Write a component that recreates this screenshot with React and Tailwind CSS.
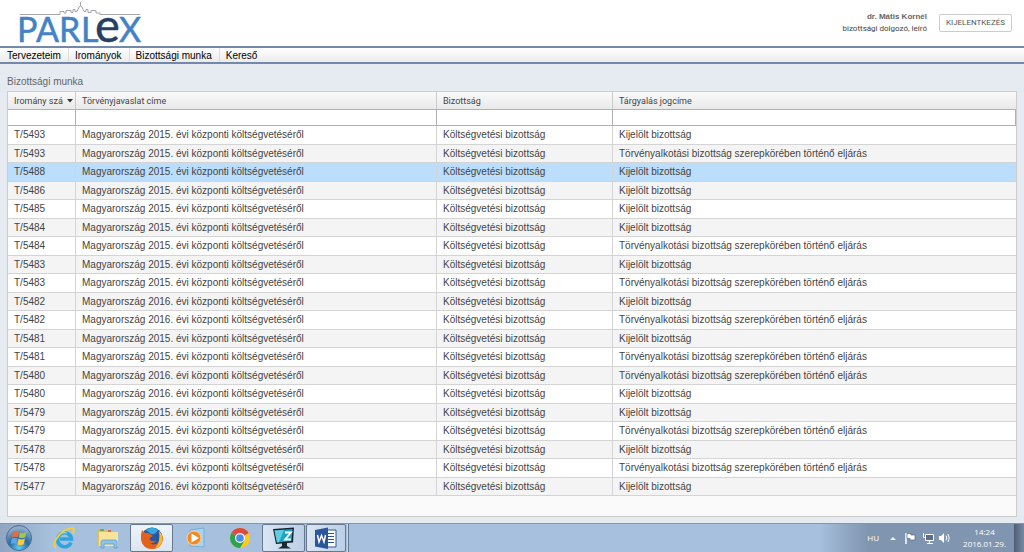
"use client"

import { useState } from "react"

const MENU = ["Tervezeteim", "Irományok", "Bizottsági munka", "Kereső"]

const KIJELOLT = "Kijelölt bizottság"
const TORVENY = "Törvényalkotási bizottság szerepkörében történő eljárás"

const ROWS = [
  { no: "T/5493", year: 2015, title: KIJELOLT },
  { no: "T/5493", year: 2015, title: TORVENY },
  { no: "T/5488", year: 2015, title: KIJELOLT },
  { no: "T/5486", year: 2015, title: KIJELOLT },
  { no: "T/5485", year: 2015, title: KIJELOLT },
  { no: "T/5484", year: 2015, title: KIJELOLT },
  { no: "T/5484", year: 2015, title: TORVENY },
  { no: "T/5483", year: 2015, title: KIJELOLT },
  { no: "T/5483", year: 2015, title: TORVENY },
  { no: "T/5482", year: 2016, title: KIJELOLT },
  { no: "T/5482", year: 2016, title: TORVENY },
  { no: "T/5481", year: 2015, title: KIJELOLT },
  { no: "T/5481", year: 2015, title: TORVENY },
  { no: "T/5480", year: 2016, title: TORVENY },
  { no: "T/5480", year: 2016, title: KIJELOLT },
  { no: "T/5479", year: 2015, title: KIJELOLT },
  { no: "T/5479", year: 2015, title: TORVENY },
  { no: "T/5478", year: 2015, title: KIJELOLT },
  { no: "T/5478", year: 2015, title: TORVENY },
  { no: "T/5477", year: 2016, title: KIJELOLT }
]

const COLUMNS = [
  { id: "no", label: "Iromány szá", width: "w-[68px]" },
  { id: "bill", label: "Törvényjavaslat címe", width: "w-[361px]" },
  { id: "committee", label: "Bizottság", width: "w-[176px]" },
  { id: "title", label: "Tárgyalás jogcíme", width: "" }
]

function Logo() {
  return (
    <svg width="124" height="44" viewBox="0 0 124 44" className="overflow-visible" role="img" aria-label="Parlex">
      <path
        d="M2 13.5H42V10.500H46V12H48V9.500H53V11.500H55V8.500H57V10.500H59L61 6L62.500 5V1V5L64 6L66 10.500H68V8.500H70V11.500H73V9.500H78V12H82V13.5H122"
        fill="none"
        stroke="#a3a5a8"
        strokeWidth="1"
      />
      <g fontFamily="Lato, sans-serif" fontSize="34" fill="#4382c4" stroke="#4382c4" strokeWidth="0.5">
        <text x="-1" y="41">P</text>
        <text x="18" y="41">A</text>
        <text x="41" y="41">R</text>
        <text x="63" y="41">L</text>
        <text x="101" y="41">X</text>
        <text x="77" y="41" fontSize="47" fill="#263f63" stroke="#263f63">e</text>
      </g>
    </svg>
  )
}

function StartIcon() {
  return (
    <svg width="28" height="28" viewBox="0 0 28 28">
      <defs>
        <radialGradient id="orb" cx="50%" cy="90%" r="80%">
          <stop offset="0" stopColor="#5fd0f5" />
          <stop offset="0.5" stopColor="#2a69a4" />
          <stop offset="1" stopColor="#8fadc9" />
        </radialGradient>
      </defs>
      <circle cx="14" cy="14" r="12.5" fill="url(#orb)" stroke="#4b6a90" />
      <path d="M8 8.500Q10.500 6.500 13.800 8L12.800 13.300Q9.800 12 7 13.500Z" fill="#ee6a33" />
      <path d="M14.800 8.500Q18 10 21.500 8L20.300 13.300Q17 15 13.800 13.600Z" fill="#9cc84b" />
      <path d="M6.700 14.700Q9.800 13.200 12.500 14.500L11.400 20Q8.500 18.500 5.500 20Z" fill="#5aa9e6" />
      <path d="M13.500 14.800Q16.500 16.300 20 14.600L18.600 20.200Q15.500 21.800 12.400 20.400Z" fill="#fccb3c" />
    </svg>
  )
}

function ExplorerIcon() {
  return (
    <svg width="24" height="24" viewBox="0 0 24 24">
      <path
        d="M19 16.500A7 7 0 1 1 19.500 13H8"
        fill="none"
        stroke="#2fa5e0"
        strokeWidth="3.600"
      />
      <path d="M7 9Q10 5.500 15 7" fill="none" stroke="#8fdcf8" strokeWidth="1.200" />
      <path d="M4 21.500C-1 19 6 7 16 2.800C21 0.800 23.500 2.500 20.500 7.500" fill="none" stroke="#f4ce3b" strokeWidth="2" />
    </svg>
  )
}

function FolderIcon() {
  return (
    <svg width="24" height="24" viewBox="0 0 24 24">
      <path d="M2 3H9L11 5H21V19H2Z" fill="#e4bd58" />
      <path d="M3 6H22V20H3Z" fill="#f8e49a" />
      <path d="M4 4H8" stroke="#4ba95a" strokeWidth="1.500" />
      <path d="M12 5H15" stroke="#d9533f" strokeWidth="1.500" />
      <path d="M5 22V16Q5 14 7 14H19Q21 14 21 16V22H18V18H8V22Z" fill="#8fc4e8" stroke="#5c9dcb" strokeWidth="0.800" />
    </svg>
  )
}

function FirefoxIcon() {
  return (
    <svg width="24" height="24" viewBox="0 0 24 24">
      <circle cx="12" cy="12" r="10.500" fill="#2558a0" />
      <path d="M6 4Q12 -0.500 18 4Q16 9 11 8Z" fill="#36a8dc" />
      <path d="M2 4L5 7Q8 6 10 8L13 10Q10 11 9.500 13Q12 17 16 14Q14 18 10 17Q16 21 19 15Q21 10 18 5Q24 9 23 14Q21 23 12 23Q3 23 1 14Q0.500 9 2 4Z" fill="#e2621b" />
      <path d="M19 5Q24 10 22 16Q20 21 15 22.500Q21 16 19 5Z" fill="#f8b92e" />
    </svg>
  )
}

function MediaIcon() {
  return (
    <svg width="24" height="24" viewBox="0 0 24 24">
      <path d="M6 4L20 2V21L6 20Z" fill="#a9d3ee" stroke="#75aeda" />
      <circle cx="10" cy="12" r="7" fill="#f08a24" stroke="#fbd3a0" />
      <path d="M7.500 7.500L15 12L7.500 16.500Z" fill="#fff" />
    </svg>
  )
}

function ChromeIcon() {
  return (
    <svg width="24" height="24" viewBox="0 0 24 24">
      <circle cx="12" cy="12" r="10" fill="#fbc91f" />
      <path d="M12 12L3.340 7A10 10 0 0 1 20.660 7Z" fill="#dd4b3e" />
      <path d="M12 12L3.340 7A10 10 0 0 0 12 22L16.500 14.500Z" fill="#2ba24c" />
      <circle cx="12" cy="12" r="5" fill="#fff" />
      <circle cx="12" cy="12" r="3.800" fill="#4a8bec" />
    </svg>
  )
}

function MonitorIcon() {
  return (
    <svg width="24" height="24" viewBox="0 0 24 24">
      <path d="M1 3L22 1.500L21 16.500L4 18Z" fill="#15242c" />
      <path d="M2.500 4.500L20.500 3L19.500 15L5 16.500Z" fill="#1fa5c4" />
      <path d="M2.500 4.500L12 3.700L7 16.300L5 16.500Z" fill="#63cde0" />
      <path d="M13 6.500H19L13 13.500H19" fill="none" stroke="#fff" strokeWidth="1.800" />
      <path d="M10 17H15V20L19 22.500H6L10 20Z" fill="#1b2a32" />
    </svg>
  )
}

function WordIcon() {
  return (
    <svg width="24" height="24" viewBox="0 0 24 24">
      <path d="M12 4H22V21H12Z" fill="#fff" stroke="#2b579a" />
      <path d="M14 7.500H20M14 10.500H20M14 13.500H20M14 16.500H20" stroke="#2b579a" strokeWidth="1.200" />
      <path d="M1 4L14 1.500V23L1 20.500Z" fill="#2b579a" />
      <path d="M3.500 9L5 16L7.500 9.500L10 16L11.500 9" fill="none" stroke="#fff" strokeWidth="1.500" />
    </svg>
  )
}

const APPS = [
  { name: "Internet Explorer", icon: ExplorerIcon, look: "w-[43px]" },
  { name: "Fájlkezelő", icon: FolderIcon, look: "w-[43px]" },
  { name: "Firefox", icon: FirefoxIcon, look: "w-[43px] border border-[#66788f] bg-linear-to-b from-[#eef3f8] to-[#dbe5f0]" },
  { name: "Media Player", icon: MediaIcon, look: "w-[43px]" },
  { name: "Chrome", icon: ChromeIcon, look: "w-[43px]" },
  { name: "Monitor", icon: MonitorIcon, look: "w-[43px] border border-[#66788f] bg-linear-to-r from-[#d9e5f2] to-[#bccfe6]" },
  { name: "Word", icon: WordIcon, look: "w-10 border border-[#66788f] bg-linear-to-r from-[#d9e5f2] to-[#bccfe6]" }
]

function TrayIcons() {
  return (
    <svg width="62" height="16" viewBox="0 0 62 16" fill="none">
      <path d="M1 10L4 7L7 10Z" fill="#eef3f8" />
      <path d="M17 3V14" stroke="#fff" strokeWidth="1.500" />
      <path d="M18 3.500H22V5H26V10H21V8.500H18Z" fill="#fff" stroke="#4a5a70" strokeWidth="0.600" />
      <path d="M36.500 4.500H44.500V10.500H36.500Z" fill="#5d6e86" stroke="#fff" />
      <path d="M38 13.500H44M34.500 3V7.500H36M40.500 11V13" stroke="#fff" />
      <path d="M50 6H52L55 3V13L52 10H50Z" fill="#fff" />
      <path d="M57 5.500Q58.500 8 57 10.500M59 4Q61.500 8 59 12" stroke="#fff" />
    </svg>
  )
}

function Taskbar() {
  return (
    <footer className="flex h-[29px] items-stretch border-t border-[#8496ad] bg-linear-to-r from-[#8fa5c1] from-0% via-[#a6c0dd] via-5% to-[#a6c0dd]">
      <button aria-label="Start" className="flex w-[42px] items-center justify-center pr-1">
        <StartIcon />
      </button>
      <div className="flex flex-1 gap-px">
        {APPS.map(app => (
          <button
            key={app.name}
            aria-label={app.name}
            className={`flex items-center justify-center rounded-xs ${app.look}`}
          >
            <app.icon />
          </button>
        ))}
        {/* edge of the second Word window */}
        <span className="w-0.5 border-r border-[#66788f] bg-[#c6d6e9]" />
      </div>
      <div className="flex items-center bg-linear-to-r from-[#a6c0dd] from-0% via-[#8095b0] via-25% to-[#8095b0] pl-12 font-['Open_Sans',sans-serif] text-[8px] text-white">
        <span className="pr-2.5">HU</span>
        <TrayIcons />
        <div className="px-2 pl-3 text-center leading-3">
          <div>14:24</div>
          <div>2016.01.29.</div>
        </div>
      </div>
      <button aria-label="Asztal megjelenítése" className="w-2.5 border-l border-[#4c5b70] bg-linear-to-r from-[#55657c] to-[#7788a0]" />
    </footer>
  )
}

export default function App() {

  const [selected, setSelected] = useState(2)
  const [filters, setFilters] = useState({})

  function updateFilter(id, value) {
    setFilters(prev => ({ ...prev, [id]: value }))
  }

  return (
    <div className="flex min-h-screen flex-col bg-[#e6ebf2] font-['Liberation_Sans',Arial,sans-serif] text-[10px] text-[#444]">

      <header className="flex h-[46px] items-center justify-between bg-white pr-3 pl-[18px]">
        <Logo />
        <div className="flex items-center gap-3">
          <div className="text-right text-[8px] leading-3">
            <div className="font-bold text-[#666]">dr. Mátis Kornél</div>
            <div className="font-[Roboto,sans-serif]">bizottsági dolgozó, leíró</div>
          </div>
          <button className="h-[18px] rounded-xs border border-[#ccc] px-1.5 font-[Roboto,sans-serif] text-[8px] text-[#555]">
            KIJELENTKEZÉS
          </button>
        </div>
      </header>

      <nav className="flex h-[18px] border-y-2 border-[#7489a9] bg-linear-to-b from-white to-[#ebebeb] pl-px leading-[15px] text-black">
        {MENU.map(item => (
          <a key={item} href="#" className="border-r border-[#ddd] pr-[7px] pl-1.5 last:border-r-0">
            {item}
          </a>
        ))}
      </nav>

      <main className="flex flex-1 flex-col px-[7px] pt-2.5 pb-1.5">
        <h1 className="h-[17px] leading-4 text-[#666]">Bizottsági munka</h1>

        <div className="flex-1 border border-[#ccc] bg-[#fafafa]">
          <table className="w-full table-fixed border-separate border-spacing-0">
            <thead>
              <tr className="h-[17px] bg-linear-to-b from-[#fafafa] to-[#e9e9e9] font-[Roboto,sans-serif] text-[9px] leading-3">
                {COLUMNS.map(col => (
                  <th
                    key={col.id}
                    className={`${col.width} border-r border-[#ccc] px-1.5 py-0 text-left font-normal whitespace-nowrap last:border-r-0`}
                  >
                    {col.label}
                    {col.id === "no" && (
                      <svg width="6" height="4" viewBox="0 0 6 4" className="ml-1 inline">
                        <path d="M0 0H6L3 3.500Z" fill="#333" />
                      </svg>
                    )}
                  </th>
                ))}
              </tr>
              <tr>
                {COLUMNS.map(col => (
                  <td key={col.id} className="p-0">
                    <input
                      type="text"
                      aria-label={col.label}
                      value={filters[col.id] ?? ""}
                      onChange={(e) => updateFilter(col.id, e.target.value)}
                      className="block h-[17px] w-full border border-l-0 border-[#b0b0b0] bg-white px-1.5"
                    />
                  </td>
                ))}
              </tr>
            </thead>
            <tbody className="leading-4">
              {ROWS.map((row, i) => (
                <tr
                  key={i}
                  onClick={() => setSelected(i)}
                  className={
                    i === selected
                      ? "h-[18px] bg-[#bbdefd] odd:h-[19px]"
                      : "h-[18px] bg-[#f4f4f4] odd:h-[19px] odd:bg-white"
                  }
                >
                  <td className="border-r border-b border-[#d4d4d4] px-1.5 py-0">{row.no}</td>
                  <td className="border-r border-b border-[#d4d4d4] px-1.5 py-0">
                    Magyarország {row.year}. évi központi költségvetéséről
                  </td>
                  <td className="border-r border-b border-[#d4d4d4] px-1.5 py-0">Költségvetési bizottság</td>
                  <td className="border-b border-[#d4d4d4] px-1.5 py-0">{row.title}</td>
                </tr>
              ))}
            </tbody>
          </table>
        </div>
      </main>

      <Taskbar />
    </div>
  )
}
